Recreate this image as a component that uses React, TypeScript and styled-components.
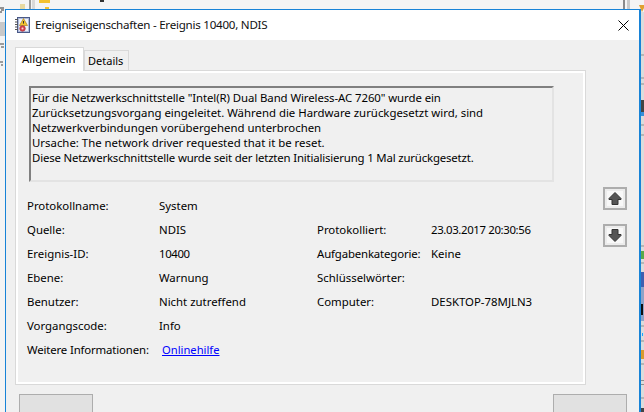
import React from "react";
import styled, { createGlobalStyle } from "styled-components";

const Global = createGlobalStyle`
  html, body { margin: 0; padding: 0; background: #f0f0f0; }
  body { font-family: "Noto Sans", "Open Sans", sans-serif; font-size: 11.4px; color: #000; }
`;

const Desktop = styled.div`
  position: relative;
  width: 644px;
  height: 412px;
  overflow: hidden;
  background: #e9e9e9;
`;

const Backdrop = styled.svg`
  position: absolute;
  inset: 0;
`;

const Window = styled.section`
  position: absolute;
  left: 5px;
  top: 9px;
  width: 636px;
  height: 410px;
  box-sizing: border-box;
  border: 1px solid #1883d7;
  border-right-width: 2px;
  background: #f0f0f0;
  display: flex;
  flex-direction: column;
`;

const TitleBar = styled.header`
  height: 30px;
  flex: none;
  background: #fff;
  display: flex;
  align-items: center;
  padding: 0 10px 0 9px;
  gap: 5px;
`;

const TitleText = styled.h1`
  flex: 1;
  margin: 0;
  font-size: 11.6px;
  font-weight: 400;
  line-height: 16px;
  letter-spacing: -0.25px;
  color: #111;
`;

const Content = styled.div`
  display: grid;
  grid-template-columns: 571px 24px;
  column-gap: 17px;
  padding: 8px 0 0 9px;
`;

const TabColumn = styled.div`
  display: flex;
  flex-direction: column;
`;

const TabStrip = styled.div`
  display: flex;
  align-items: flex-end;
  height: 23px;
  position: relative;
  z-index: 1;
  margin-bottom: -1px;
`;

const Tab = styled.div<{ $active?: boolean }>`
  box-sizing: border-box;
  height: ${(p) => (p.$active ? 24 : 21)}px;
  width: ${(p) => (p.$active ? 69 : 45)}px;
  padding: ${(p) => (p.$active ? "3px 0 0 6px" : "2px 0 0 3px")};
  line-height: 16px;
  background: ${(p) => (p.$active ? "#fff" : "#f0f0f0")};
  border: 1px solid #d9d9d9;
  border-bottom: ${(p) => (p.$active ? "none" : "1px solid #d9d9d9")};
  font-size: ${(p) => (p.$active ? "11.4px" : "11px")};
`;

const TabPanel = styled.div`
  box-sizing: border-box;
  height: 315px;
  border: 1px solid #d9d9d9;
  box-shadow: inset 0 0 0 2px #fff;
  padding: 15px 31px 0 13px;
  display: flex;
  flex-direction: column;
`;

const Message = styled.div`
  box-sizing: border-box;
  height: 96px;
  border: 2px solid;
  border-color: #808080 #e3e3e3 #e3e3e3 #808080;
  padding: 2px 0 0 1px;
  line-height: 15px;
  font-size: 11.4px;
  white-space: nowrap;
`;

const MessageLine = styled.div<{ $squeeze: number }>`
  letter-spacing: ${(p) => p.$squeeze}px;
`;

const Details = styled.dl`
  margin: 11px 0 0 -2px;
  display: grid;
  grid-template-columns: 132px 158px 114px 1fr;
  grid-auto-rows: 24px;
  align-items: center;
`;

const Label = styled.dt<{ $tight?: boolean }>`
  margin: 0;
  white-space: nowrap;
  letter-spacing: ${(p) => (p.$tight ? "-0.15px" : "0")};
`;

const Value = styled.dd<{ $span?: boolean; $digits?: boolean }>`
  margin: 0;
  white-space: nowrap;
  grid-column: ${(p) => (p.$span ? "span 3" : "auto")};
  letter-spacing: ${(p) => (p.$digits ? "-0.36px" : "0")};
`;

const HelpLink = styled.a`
  color: #0000ff;
  text-decoration: underline;
  margin-left: 3px;
  font-size: 11.2px;
`;

const Pager = styled.div`
  display: flex;
  flex-direction: column;
  gap: 14px;
  padding-top: 139px;
`;

const ArrowButton = styled.button`
  box-sizing: border-box;
  width: 24px;
  height: 23px;
  padding: 0;
  border: 2px solid #adadad;
  background: #ececec;
  display: flex;
  align-items: center;
  justify-content: center;
`;

const Footer = styled.div`
  display: flex;
  justify-content: space-between;
  padding: 9px 13px 0 13px;
  width: 608px;
`;

const FooterButton = styled.button`
  width: 74px;
  height: 24px;
  box-sizing: border-box;
  border: 1px solid #adadad;
  background: #e1e1e1;
`;

const rows: [string, string, string?, string?][] = [
  ["Protokollname:", "System"],
  ["Quelle:", "NDIS", "Protokolliert:", "23.03.2017 20:30:56"],
  ["Ereignis-ID:", "10400", "Aufgabenkategorie:", "Keine"],
  ["Ebene:", "Warnung", "Schlüsselwörter:", ""],
  ["Benutzer:", "Nicht zutreffend", "Computer:", "DESKTOP-78MJLN3"],
  ["Vorgangscode:", "Info"],
];

const lines: [string, number][] = [
  ['Für die Netzwerkschnittstelle "Intel(R) Dual Band Wireless-AC 7260" wurde ein', -0.08],
  ["Zurücksetzungsvorgang eingeleitet. Während die Hardware zurückgesetzt wird, sind", 0],
  ["Netzwerkverbindungen vorübergehend unterbrochen", 0],
  ["Ursache: The network driver requested that it be reset.", 0],
  ["Diese Netzwerkschnittstelle wurde seit der letzten Initialisierung 1 Mal zurückgesetzt.", -0.17],
];

const LogIcon = () => (
  <svg width="15" height="16" viewBox="0 0 15 16">
    <rect x="2.5" y="0.5" width="12" height="15" fill="#aebbdc" stroke="#4a5a88" />
    <rect x="4" y="2" width="9" height="12" fill="#eef1f8" />
    <path d="M0 2.5h3M0 5h3M0 7.5h3M0 10h3M0 12.5h3" stroke="#555" strokeWidth="1.2" />
    <path d="M8.5 1.5 L12.5 8.5 H4.5 Z" fill="#f4c430" stroke="#a8801a" strokeWidth="0.7" />
    <path d="M8.5 4v2.6" stroke="#333" strokeWidth="1" />
    <circle cx="7.5" cy="11.5" r="2.8" fill="#d9434e" stroke="#9b2a32" strokeWidth="0.6" />
    <circle cx="7.5" cy="11.5" r="1" fill="#f8d8da" />
  </svg>
);

const CloseIcon = () => (
  <svg width="11" height="11" viewBox="0 0 11 11">
    <path d="M0.5 0.5 L10.5 10.5 M10.5 0.5 L0.5 10.5" stroke="#000" strokeWidth="1" />
  </svg>
);

const UpIcon = () => (
  <svg width="16" height="15" viewBox="0 0 16 15" style={{ display: "block" }}>
    <rect width="16" height="15" fill="#f8f8f8" />
    <path d="M8 1.5 L14 7.5 V8.5 H11 V13.5 H5 V8.5 H2 V7.5 Z" fill="#555" stroke="#333" strokeWidth="1" />
  </svg>
);

const DownIcon = () => (
  <svg width="16" height="15" viewBox="0 0 16 15" style={{ display: "block" }}>
    <rect width="16" height="15" fill="#f8f8f8" />
    <path d="M8 13.5 L14 7.5 V6.5 H11 V1.5 H5 V6.5 H2 V7.5 Z" fill="#555" stroke="#333" strokeWidth="1" />
  </svg>
);

const BackdropArt = () => (
  <Backdrop width="644" height="412" viewBox="0 0 644 412">
    <rect width="644" height="412" fill="#f4f4f4" />
    <rect x="0" y="22" width="5" height="14" fill="#c9c9c9" />
    <path d="M0 8h4M1 10h3M0 12h2" stroke="#333" />
    <path d="M0 44h4M1 47h3M0 62h3M1 65h2" stroke="#444" />
    <rect x="20" y="4" width="5" height="5" fill="#e8d9a0" />
    <rect x="29" y="0" width="2" height="9" fill="#9a9a9a" />
    <rect x="32" y="0" width="3" height="9" fill="#d8d8d8" />
    <rect x="39" y="0" width="11" height="3" fill="#f2c230" />
    <rect x="45" y="7" width="4" height="2" fill="#f2c230" />
    <rect x="100" y="0" width="4" height="2" fill="#333" />
    <rect x="623" y="0" width="2" height="9" fill="#8a8a8a" />
    <rect x="627" y="0" width="3" height="9" fill="#c9c9c9" />
    <path d="M639 5h5v3l-2 4z" fill="#e0a030" />
    <rect x="641" y="12" width="3" height="400" fill="#dcdcdc" />
    <path d="M641 55h3M641 78h3M641 84h3M641 125h3M641 135h3M641 246h3M641 263h3M641 326h3M641 341h3M641 364h3M641 380.5h3M641 384.5h3M641 398h3" stroke="#8f8f8f" />
    <rect x="641" y="100" width="3" height="12" fill="#444" />
    <rect x="641" y="112" width="3" height="4" fill="#3a8fd8" />
    <rect x="641" y="251" width="3" height="8" fill="#5aa84a" />
    <rect x="641" y="272" width="3" height="15" fill="#3f5fb0" />
    <rect x="641" y="287" width="3" height="34" fill="#8fa3c8" />
    <rect x="641" y="304" width="2" height="11" fill="#111" />
    <rect x="642" y="333" width="1" height="3" fill="#20a0ff" />
    <rect x="641" y="350" width="3" height="9" fill="#d89a30" />
    <rect x="641" y="408" width="3" height="4" fill="#444" />
  </Backdrop>
);

export default function App() {
  return (
    <>
      <Global />
      <Desktop>
        <BackdropArt />
        <Window>
          <TitleBar>
            <LogIcon />
            <TitleText>Ereigniseigenschaften - Ereignis 10400, NDIS</TitleText>
            <CloseIcon />
          </TitleBar>
          <Content>
            <TabColumn>
              <TabStrip>
                <Tab $active>Allgemein</Tab>
                <Tab>Details</Tab>
              </TabStrip>
              <TabPanel>
                <Message>
                  {lines.map(([l, s]) => (
                    <MessageLine key={l} $squeeze={s}>
                      {l}
                    </MessageLine>
                  ))}
                </Message>
                <Details>
                  {rows.map(([a, b, c, d]) => (
                    <React.Fragment key={a}>
                      <Label>{a}</Label>
                      <Value $span={!c} $digits={b === "10400"}>
                        {b}
                      </Value>
                      {c && <Label $tight={c === "Aufgabenkategorie:"}>{c}</Label>}
                      {c && <Value $digits={c === "Protokolliert:"}>{d}</Value>}
                    </React.Fragment>
                  ))}
                  <Label $tight>Weitere Informationen:</Label>
                  <Value $span>
                    <HelpLink href="#">Onlinehilfe</HelpLink>
                  </Value>
                </Details>
              </TabPanel>
            </TabColumn>
            <Pager>
              <ArrowButton aria-label="Vorheriges Ereignis">
                <UpIcon />
              </ArrowButton>
              <ArrowButton aria-label="Nächstes Ereignis">
                <DownIcon />
              </ArrowButton>
            </Pager>
          </Content>
          <Footer>
            <FooterButton aria-label="Kopieren" />
            <FooterButton aria-label="Schließen" />
          </Footer>
        </Window>
      </Desktop>
    </>
  );
}
